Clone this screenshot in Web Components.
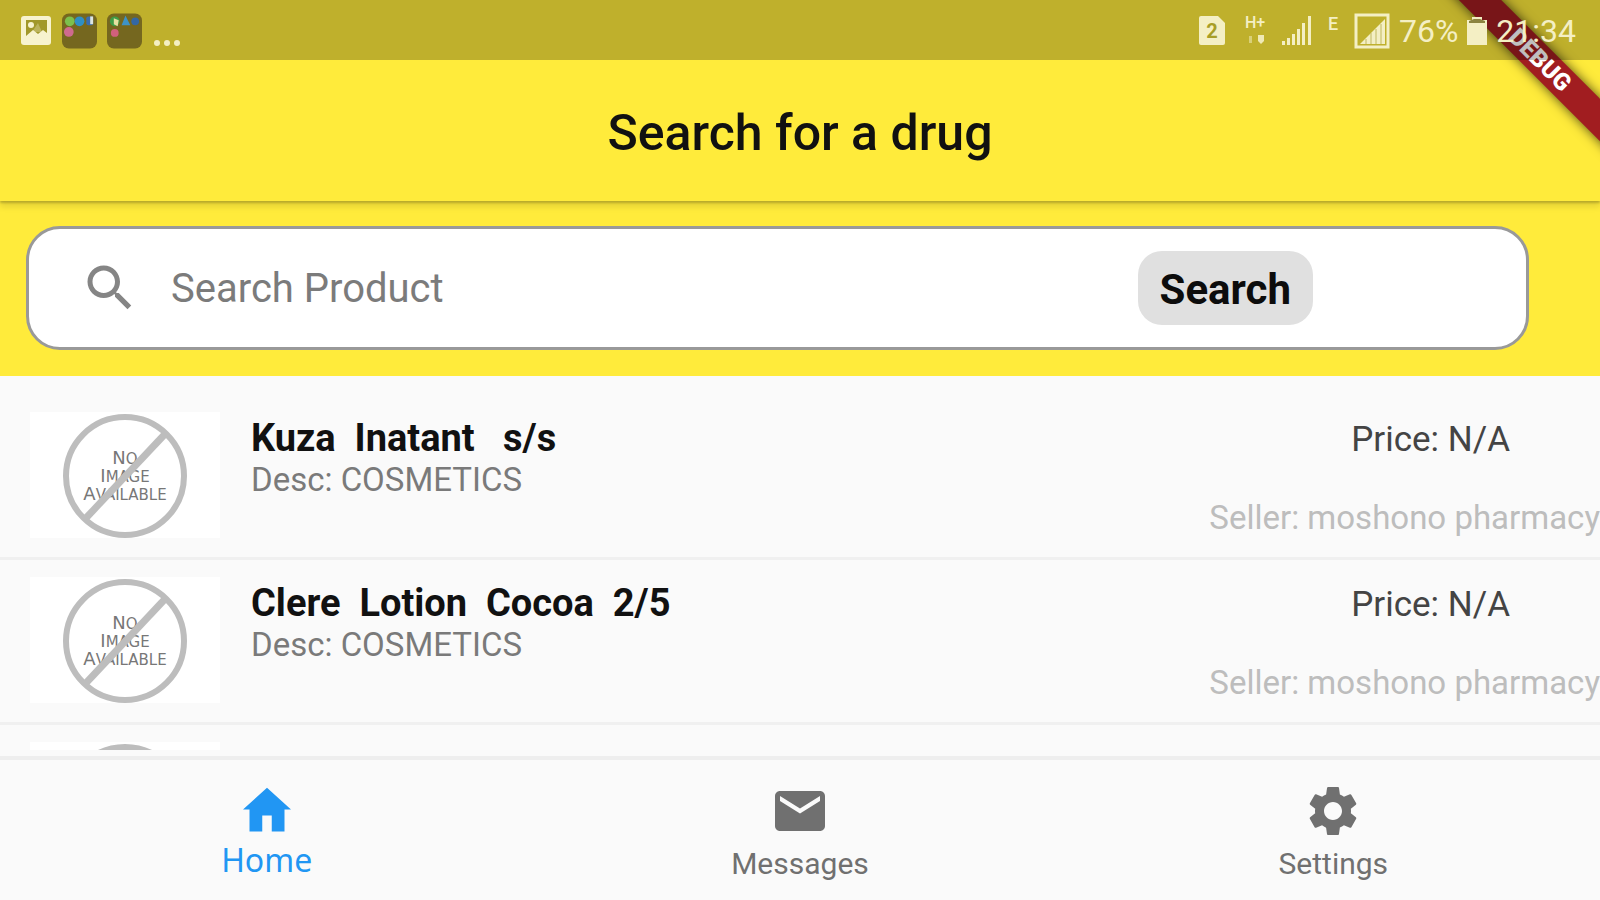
<!DOCTYPE html>
<html lang="en">
<head>
<meta charset="utf-8">
<meta name="viewport" content="width=device-width, initial-scale=1">
<title>Search for a drug</title>
<style>
    body {
        margin: 0;
        font-family: Roboto, "Noto Sans", sans-serif;
    }
</style>
</head>
<body>
<drug-app></drug-app>

<template id="status-bar">
    <style>
        :host {
            position: relative;
            z-index: 3;
            display: flex;
            align-items: center;
            justify-content: space-between;
            box-sizing: border-box;
            height: 60px;
            padding: 2px 24px 0 20px;
            background: rgba(0, 0, 0, 0.25);
            color: #f4efc4;
            font-size: 32px;
        }

        div {
            display: flex;
            align-items: center;
            gap: 10px;
        }

        svg {
            display: block;
        }

        .right {
            gap: 9px;
        }
    </style>
    <div>
        <svg width="32" height="32" viewBox="0 0 32 32">
            <rect x="1" y="1" width="30" height="29" rx="3" fill="#f7f3cf"/>
            <path d="M6 5h21v13l-4-3-5 4-5-4-7 6z" fill="#a1982a"/>
            <circle cx="11" cy="10" r="3" fill="#f7f3cf"/>
            <path d="M12 17l6-9 4 9z" fill="#f7f3cf" opacity=".3"/>
        </svg>
        <svg width="35" height="36" viewBox="0 0 36 36">
            <rect x="0" y="0" width="36" height="36" rx="7" fill="#75671f"/>
            <circle cx="8" cy="8" r="5" fill="#7cc04c"/>
            <circle cx="18" cy="8" r="5" fill="#2f8fc4"/>
            <rect x="25" y="3" width="7" height="9" rx="2" fill="#3a6cb0"/>
            <rect x="29" y="3" width="3" height="8" fill="#dfe6e0"/>
            <circle cx="7" cy="19" r="5" fill="#cf6a8e"/>
        </svg>
        <svg width="35" height="36" viewBox="0 0 36 36">
            <rect x="0" y="0" width="36" height="36" rx="7" fill="#75671f"/>
            <circle cx="8" cy="8" r="5" fill="#3f9c46"/>
            <path d="M7 5l5 2-1 6-4-2z" fill="#e6e0a0"/>
            <path d="M15 12l4-10 5 10z" fill="#3d93c8"/>
            <circle cx="29" cy="8" r="4" fill="#3367a4"/>
            <circle cx="8" cy="20" r="4" fill="#d2607c"/>
        </svg>
        <svg width="28" height="36" viewBox="0 0 28 36" fill="#f4efc4">
            <circle cx="5" cy="30" r="3"/><circle cx="15" cy="30" r="3"/><circle cx="25" cy="30" r="3"/>
        </svg>
    </div>
    <div class="right">
        <slot></slot>
    </div>
</template>

<template id="debug-ribbon">
    <style>
        :host {
            position: absolute;
            top: 0;
            right: 0;
            z-index: 2;
            width: 180px;
            height: 180px;
            overflow: hidden;
            pointer-events: none;
        }

        span {
            position: absolute;
            top: 45px;
            right: -60px;
            width: 240px;
            background: #a11d20;
            box-shadow: 0 0 12px rgba(0, 0, 0, 0.7);
            color: #fff;
            font-size: 24px;
            font-weight: 900;
            line-height: 30px;
            text-align: center;
            transform: rotate(45deg);
        }
    </style>
    <span><slot></slot></span>
</template>

<template id="app-bar">
    <style>
        :host {
            position: relative;
            z-index: 1;
            display: block;
            padding: 45px 0 40px;
            background: #ffeb3b;
            box-shadow: 0 2px 2px rgba(0, 0, 0, 0.2), 0 6px 6px rgba(0, 0, 0, 0.1);
        }

        h1 {
            margin: 0;
            color: #111;
            font-size: 50px;
            font-weight: 500;
            line-height: 56px;
            text-align: center;
        }
    </style>
    <h1><slot></slot></h1>
</template>

<template id="search-box">
    <style>
        :host {
            display: block;
            padding: 25px 71px 26px 26px;
            background: #ffeb3b;
        }

        form {
            display: flex;
            align-items: center;
            box-sizing: border-box;
            height: 124px;
            padding: 0 213px 0 51px;
            border: 3px solid #999;
            border-radius: 34px;
            background: #fff;
        }

        svg {
            flex: none;
            fill: #858585;
        }

        input {
            flex: 1;
            min-width: 0;
            margin: 0 16px 0 31px;
            padding: 2px 0 0;
            border: none;
            outline: none;
            background: none;
            font: 40px/48px Roboto, sans-serif;
        }

        input::placeholder {
            color: #7b7b7b;
            opacity: 1;
        }

        button {
            height: 74px;
            padding: 4px 22px 0;
            border: none;
            border-radius: 24px;
            background: #e0e0e0;
            color: #0c0c0c;
            cursor: pointer;
            font: 700 42px/48px Roboto, sans-serif;
        }
    </style>
    <form>
        <svg width="60" height="60" viewBox="0 0 24 24"><path d="M15.5 14h-.79l-.28-.27C15.41 12.59 16 11.11 16 9.5 16 5.91 13.09 3 9.5 3S3 5.91 3 9.5 5.91 16 9.5 16c1.61 0 3.09-.59 4.23-1.57l.27.28v.79l5 4.99L20.49 19l-4.99-5zm-6 0C7.01 14 5 11.99 5 9.5S7.01 5 9.5 5 14 7.01 14 9.5 11.99 14 9.5 14z"/></svg>
        <input type="text" aria-label="Search Product" placeholder="Search Product">
        <button type="button">Search</button>
    </form>
</template>

<template id="product-row">
    <style>
        :host {
            display: flex;
            flex: none;
            box-sizing: border-box;
            height: 165px;
            padding: 17px 0 0 30px;
            border-bottom: 3px solid #f0f0f0;
        }

        :host([loading]) :is(text, .info, .offer) {
            display: none;
        }

        svg {
            flex: none;
            background: #fff;
        }

        .info {
            flex: 1;
            padding: 5px 0 0 31px;
        }

        h2,
        p {
            margin: 0;
            font-size: 33px;
            font-weight: 400;
            line-height: 42px;
            white-space: pre;
        }

        h2 {
            color: #111;
            font-size: 38px;
            font-weight: 700;
        }

        .desc {
            color: #7a7a7a;
        }

        .offer {
            display: flex;
            flex-direction: column;
            gap: 36px;
            padding-top: 7px;
        }

        .price {
            padding-right: 90px;
            color: #444;
            font-size: 35px;
            text-align: right;
        }

        .seller {
            color: #bdbdbd;
        }
    </style>
    <svg width="190" height="126" viewBox="0 0 190 126" font-family="DejaVu Sans, sans-serif" text-anchor="middle">
        <g fill="#777" font-size="18">
            <text x="95" y="52">N<tspan font-size="15">O</tspan></text>
            <text x="95" y="70">I<tspan font-size="15">MAGE</tspan></text>
            <text x="95" y="88">A<tspan font-size="15">VAILABLE</tspan></text>
        </g>
        <circle cx="95" cy="64" r="59" fill="none" stroke="#bdbdbd" stroke-width="6"/>
        <path d="M56 106L135 22" stroke="#bdbdbd" stroke-width="7"/>
    </svg>
    <div class="info">
        <h2><slot name="name"></slot></h2>
        <p class="desc">Desc: <slot name="desc"></slot></p>
    </div>
    <div class="offer">
        <p class="price">Price: <slot name="price"></slot></p>
        <p class="seller">Seller: <slot name="seller"></slot></p>
    </div>
</template>

<template id="nav-item">
    <style>
        :host {
            flex: 1;
            color: #707070;
            font-size: 30px;
            line-height: 44px;
        }

        :host([active]) {
            color: #2196f3;
            font-family: "Noto Sans", sans-serif;
            font-size: 32px;
            line-height: 36px;
        }

        a {
            display: flex;
            flex-direction: column;
            align-items: center;
            gap: 1px;
            padding-top: 21px;
            color: inherit;
            text-decoration: none;
        }

        svg {
            fill: currentColor;
        }
    </style>
    <a href="#">
        <svg width="60" height="60" viewBox="0 0 24 24"><path/></svg>
        <slot></slot>
    </a>
</template>

<template id="drug-app">
    <style>
        :host {
            position: relative;
            display: flex;
            flex-direction: column;
            height: 100vh;
            overflow: hidden;
            background: #fafafa;
        }

        .top {
            flex: none;
            background: #ffeb3b;
        }

        .list {
            flex: 1;
            display: flex;
            flex-direction: column;
            min-height: 0;
            margin-bottom: 6px;
            padding-top: 19px;
            box-sizing: border-box;
            overflow: hidden;
        }

        nav {
            flex: none;
            display: flex;
            height: 140px;
            border-top: 4px solid #eee;
        }
    </style>
    <div class="top">
        <status-bar>
            <svg width="28" height="30" viewBox="0 0 28 30"><path d="M3 0h17l7 7v20q0 2-2 2H3q-2 0-2-2V2q0-2 2-2z" fill="#f4efc4"/><text x="14" y="22" font-size="20" font-weight="700" text-anchor="middle" fill="#a89e26">2</text></svg>
            <svg width="38" height="36" viewBox="0 0 38 36" fill="#f4efc4"><text x="10" y="15" font-size="16" font-weight="500">H+</text><path d="M14 23h3v7h-3z" opacity=".5"/><path d="M23 22h6v6l-3 3-3-3z" opacity=".9"/></svg>
            <svg width="30" height="36" viewBox="0 0 30 36" fill="#f4efc4"><path d="M0 28h3v4H0zM5 25h3v7H5zM10 21h3v11h-3zM15 16h3v16h-3zM20 10h3v22h-3zM26 3h3v29h-3z"/></svg>
            <svg width="24" height="36" viewBox="0 0 24 36" fill="#f4efc4"><text x="7" y="17" font-size="18" font-weight="500">E</text></svg>
            <svg width="36" height="36" viewBox="0 0 36 36"><rect x="2" y="2" width="32" height="32" fill="none" stroke="#f4efc4" stroke-width="3"/><path d="M6 31L31 6v25z" fill="#f4efc4"/><path d="M12 26v5M17 20v11M22 16v15M27 11v20" stroke="#c0b860"/></svg>
            <span>76%</span>
            <svg width="20" height="30" viewBox="0 0 20 30"><path d="M5 1h10v3h5v25H0V4h5z" fill="#f4efc4"/><path d="M2 7V5l5-2h6l5 2v2z" fill="#8c8440"/></svg>
            <time>21:34</time>
        </status-bar>
        <app-bar>Search for a drug</app-bar>
        <search-box></search-box>
    </div>
    <div class="list">
        <product-row>
            <span slot="name">Kuza  Inatant   s/s</span>
            <span slot="desc">COSMETICS</span>
            <span slot="price">N/A</span>
            <span slot="seller">moshono pharmacy</span>
        </product-row>
        <product-row>
            <span slot="name">Clere  Lotion  Cocoa  2/5</span>
            <span slot="desc">COSMETICS</span>
            <span slot="price">N/A</span>
            <span slot="seller">moshono pharmacy</span>
        </product-row>
        <product-row loading></product-row>
    </div>
    <nav>
        <nav-item active icon="home">Home</nav-item>
        <nav-item icon="mail">Messages</nav-item>
        <nav-item icon="settings">Settings</nav-item>
    </nav>
    <debug-ribbon>DEBUG</debug-ribbon>
</template>

<script>
const icons = {
    home: 'M10.1 20.2v-6.4h3.8v6.4H19v-8.8h2.6L12 2.7l-9.6 8.7H5v8.8z',
    mail: 'M20 4H4c-1.1 0-1.99.9-1.99 2L2 18c0 1.1.9 2 2 2h16c1.1 0 2-.9 2-2V6c0-1.1-.9-2-2-2zm0 4l-8 5-8-5V6l8 5 8-5v2z',
    settings: 'M19.14 12.94c.04-.3.06-.61.06-.94 0-.32-.02-.64-.07-.94l2.03-1.58c.18-.14.23-.41.12-.61l-1.92-3.32c-.12-.22-.37-.29-.59-.22l-2.39.96c-.5-.38-1.03-.7-1.62-.94L14.4 2.81c-.04-.24-.24-.41-.48-.41h-3.84c-.24 0-.43.17-.47.41L9.25 5.35c-.59.24-1.13.57-1.62.94l-2.39-.96c-.22-.08-.47 0-.59.22L2.74 8.87c-.12.21-.08.47.12.61l2.03 1.58c-.05.3-.09.63-.09.94s.02.64.07.94l-2.03 1.58c-.18.14-.23.41-.12.61l1.92 3.32c.12.22.37.29.59.22l2.39-.96c.5.38 1.03.7 1.62.94l.36 2.54c.05.24.24.41.48.41h3.84c.24 0 .44-.17.47-.41l.36-2.54c.59-.24 1.13-.56 1.62-.94l2.39.96c.22.08.47 0 .59-.22l1.92-3.32c.12-.22.07-.47-.12-.61l-2.01-1.58zM12 15.6c-1.98 0-3.6-1.62-3.6-3.6s1.62-3.6 3.6-3.6 3.6 1.62 3.6 3.6-1.62 3.6-3.6 3.6z'
};

// Every element clones the template that carries its tag name.
class BaseElement extends HTMLElement {
    constructor() {
        super();

        const template = document.getElementById(this.localName);
        this.attachShadow({ mode: 'open' });
        this.shadowRoot.appendChild(template.content.cloneNode(true));
    }
}

class StatusBar extends BaseElement {}
class DebugRibbon extends BaseElement {}
class AppBar extends BaseElement {}
class SearchBox extends BaseElement {}
class ProductRow extends BaseElement {}
class DrugApp extends BaseElement {}

class NavItem extends BaseElement {
    connectedCallback() {
        this.shadowRoot.querySelector('path').setAttribute('d', icons[this.getAttribute('icon')]);
    }
}

window.customElements.define('status-bar', StatusBar);
window.customElements.define('debug-ribbon', DebugRibbon);
window.customElements.define('app-bar', AppBar);
window.customElements.define('search-box', SearchBox);
window.customElements.define('product-row', ProductRow);
window.customElements.define('nav-item', NavItem);
window.customElements.define('drug-app', DrugApp);
</script>
</body>
</html>
